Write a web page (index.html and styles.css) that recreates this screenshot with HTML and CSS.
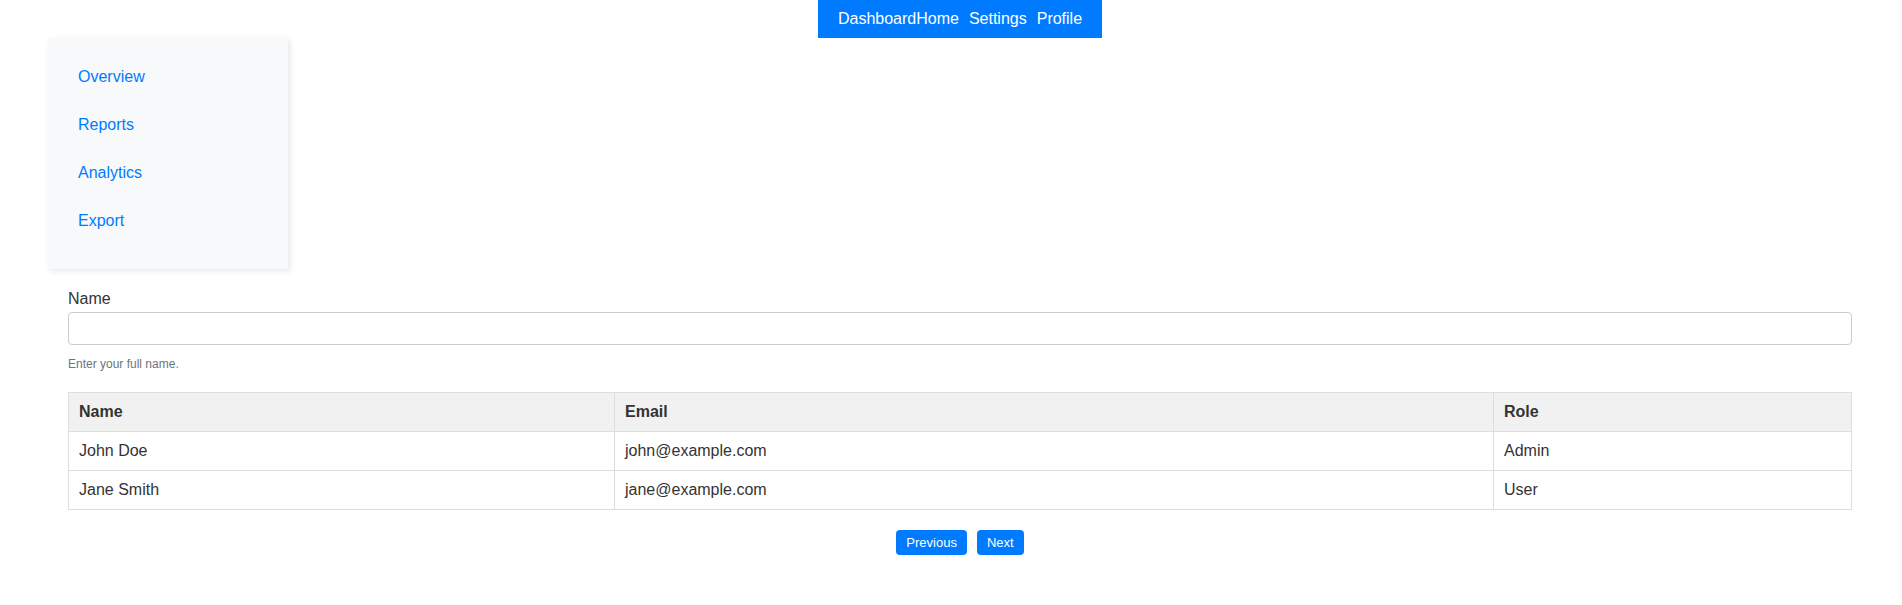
FILE: index.html
```html
<!DOCTYPE html>
<html lang="en">
<head>
<meta charset="utf-8">
<title>Dashboard</title>
<link rel="stylesheet" href="styles.css">
</head>
<body>
<header class="topbar">
  <nav class="navbar">
    <span class="brand">Dashboard</span>
    <a class="nav-link" href="#">Home</a>
    <a class="nav-link" href="#">Settings</a>
    <a class="nav-link" href="#">Profile</a>
  </nav>
</header>
<aside class="sidebar">
  <a class="side-link" href="#">Overview</a>
  <a class="side-link" href="#">Reports</a>
  <a class="side-link" href="#">Analytics</a>
  <a class="side-link" href="#">Export</a>
</aside>
<main class="main">
  <div class="form-group">
    <label class="label" for="name">Name</label>
    <input class="input" id="name" type="text">
    <small class="help">Enter your full name.</small>
  </div>
  <table class="table">
    <colgroup>
      <col class="col-name">
      <col class="col-email">
      <col class="col-role">
    </colgroup>
    <thead>
      <tr><th>Name</th><th>Email</th><th>Role</th></tr>
    </thead>
    <tbody>
      <tr><td>John Doe</td><td>john@example.com</td><td>Admin</td></tr>
      <tr><td>Jane Smith</td><td>jane@example.com</td><td>User</td></tr>
    </tbody>
  </table>
  <div class="pagination">
    <button class="btn">Previous</button>
    <button class="btn">Next</button>
  </div>
</main>
</body>
</html>
```
FILE: styles.css
```css
* { box-sizing: border-box; }
body {
  margin: 0;
  font-family: "Liberation Sans", Arial, sans-serif;
  font-size: 16px;
  color: #333;
  background: #fff;
}
.topbar {
  display: flex;
  justify-content: center;
  padding-left: 18px;
}
.navbar {
  display: flex;
  align-items: center;
  background: #007bff;
  color: #fff;
  padding: 10px 20px;
  height: 38px;
  line-height: 18px;
}
.brand { color: #fff; }
.nav-link {
  color: #fff;
  text-decoration: none;
  margin-right: 10px;
}
.nav-link:last-child { margin-right: 0; }
.sidebar {
  display: flex;
  flex-direction: column;
  width: 240px;
  margin-left: 48px;
  padding: 20px 20px 19px;
  background: #f8f9fa;
  box-shadow: 2px 2px 6px rgba(0, 0, 0, 0.1);
}
.side-link {
  display: block;
  padding: 10px;
  margin-bottom: 10px;
  line-height: 18px;
  color: #007bff;
  text-decoration: none;
}
.main {
  margin: 21px 50px 0 68px;
}
.form-group {
  display: flex;
  flex-direction: column;
  margin-bottom: 21px;
}
.label {
  line-height: 18px;
  margin-bottom: 4px;
}
.input {
  height: 33px;
  border: 1px solid #ccc;
  border-radius: 4px;
  padding: 6px 10px;
  font: inherit;
}
.help {
  margin-top: 12px;
  font-size: 12px;
  line-height: 14px;
  color: #6c757d;
}
.table {
  width: 100%;
  border-collapse: collapse;
  table-layout: fixed;
}
.col-name { width: 546px; }
.col-email { width: 879px; }
.col-role { width: auto; }
.table th, .table td {
  border: 1px solid #ddd;
  padding: 10px;
  text-align: left;
  line-height: 18px;
}
.table th {
  background: #f1f1f1;
  font-weight: bold;
}
.pagination {
  display: flex;
  justify-content: center;
  gap: 10px;
  margin-top: 20px;
}
.btn {
  background: #007bff;
  color: #fff;
  border: none;
  border-radius: 4px;
  padding: 6px 10px;
  font-family: "Liberation Sans", Arial, sans-serif;
  font-size: 13px;
  line-height: 13px;
}
```
